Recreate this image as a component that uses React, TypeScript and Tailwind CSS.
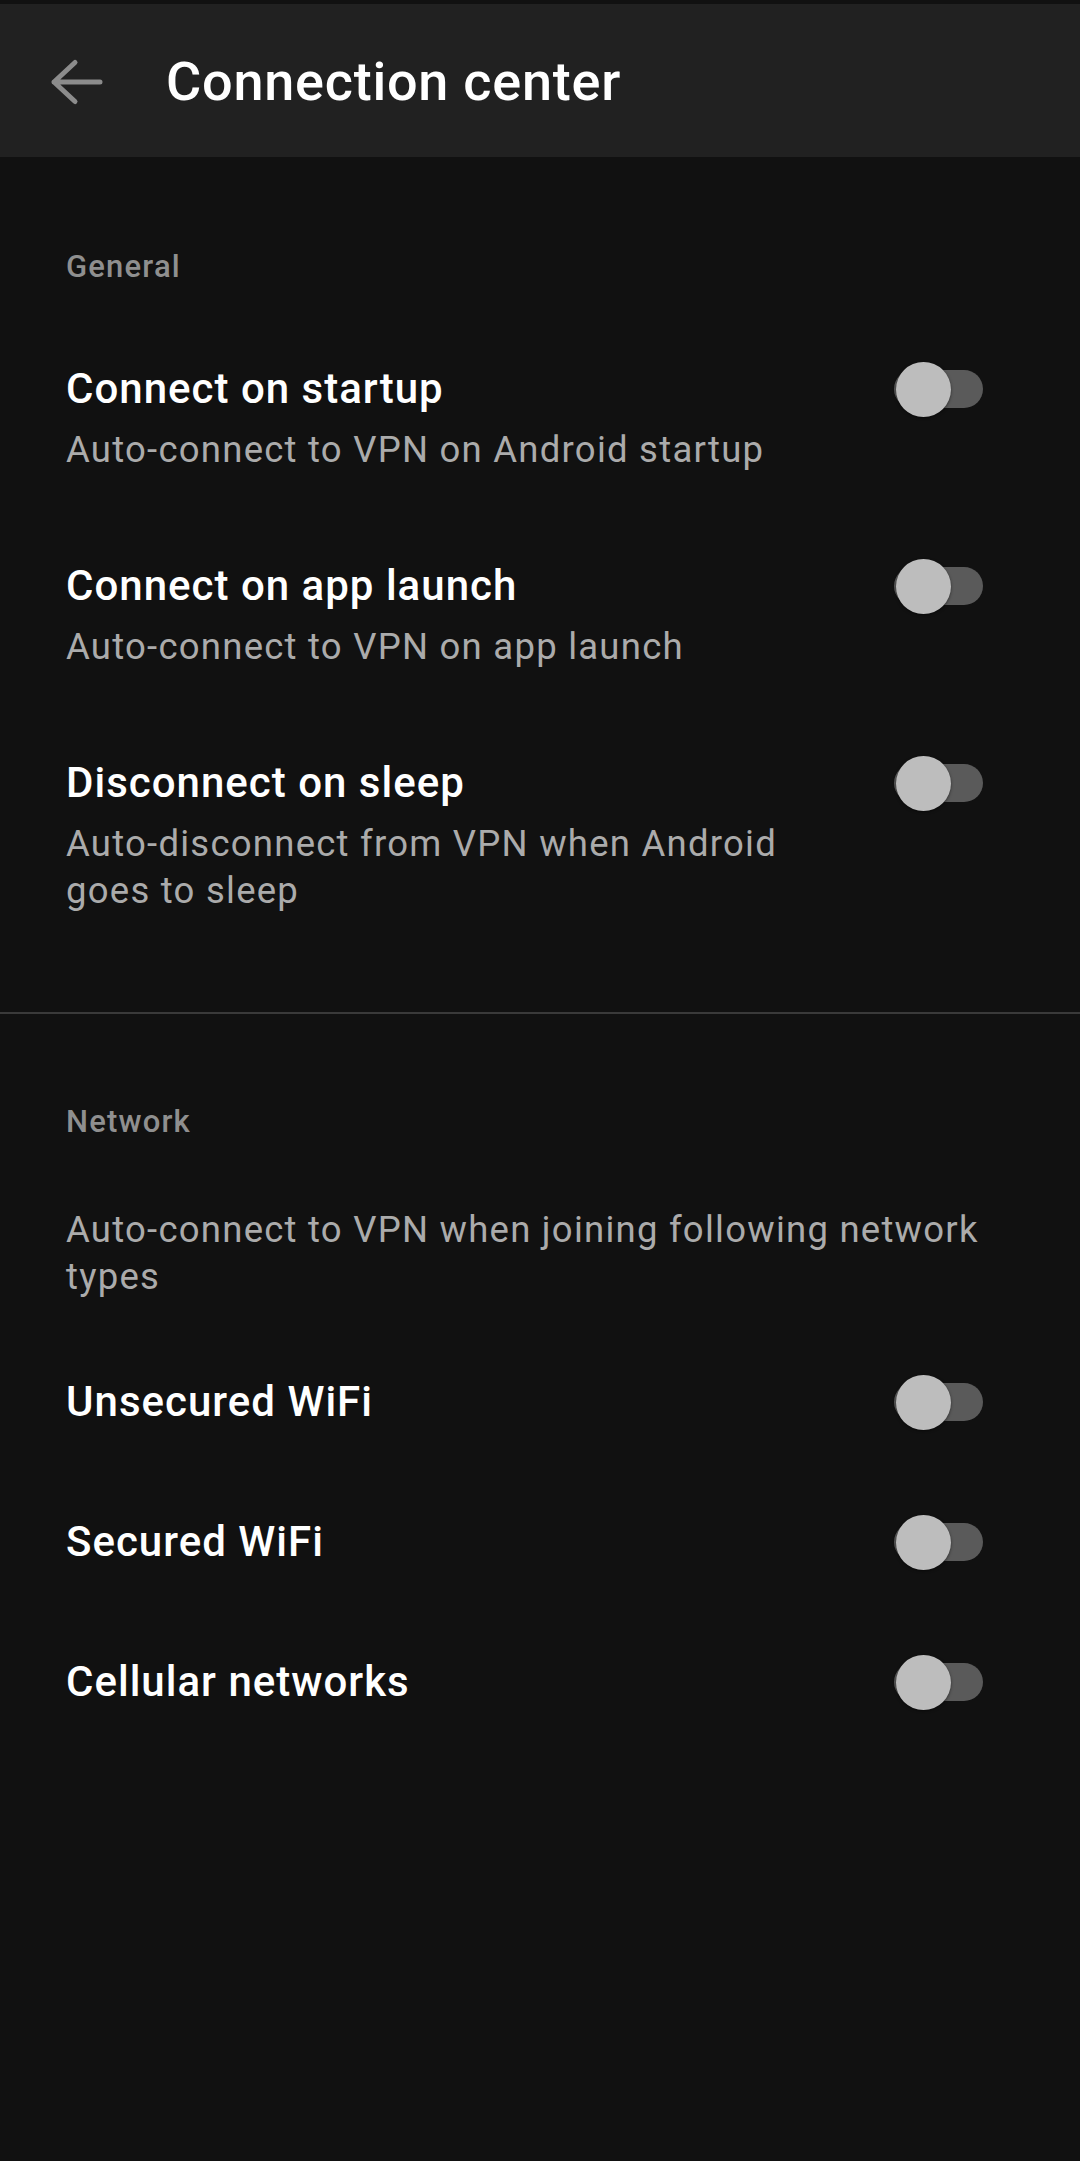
import React from 'react';

interface SettingRowProps {
    title: string;
    subtitle?: string;
    className?: string;
}

const Toggle: React.FC = () => (
    <div className="relative w-[89px] h-[55px] shrink-0">
        <div className="absolute right-0 top-[8.5px] w-[89px] h-[38px] rounded-full bg-[#5a5a5a]" />
        <div className="absolute left-[2px] top-0 w-[55px] h-[55px] rounded-full bg-[#bdbdbd] shadow-[0_1px_3px_rgba(0,0,0,0.5)]" />
    </div>
);

const SettingRow: React.FC<SettingRowProps> = ({ title, subtitle, className = '' }) => (
    <div className={`pl-[66px] pr-[97px] ${className}`}>
        <div className="flex items-center justify-between h-[60px]">
            <span className="text-[42px] font-medium text-white leading-[60px] tracking-[0.024em]">{title}</span>
            <Toggle />
        </div>
        {subtitle && (
            <p className="mt-[7px] pr-[150px] text-[36.5px] leading-[47px] tracking-[0.034em] text-[#ababab]">
                {subtitle}
            </p>
        )}
    </div>
);

const SectionLabel: React.FC<{ label: string; className?: string }> = ({ label, className = '' }) => (
    <div className={`pl-[66px] text-[31px] font-medium leading-[40px] tracking-[0.038em] text-[#8f8f8f] ${className}`}>
        {label}
    </div>
);

export default function App() {
    return (
        <div
            className="min-h-[2161px] bg-[#111111] pt-[4px]"
            style={{ fontFamily: 'Roboto, "Noto Sans", sans-serif' }}
        >
            {/* Toolbar */}
            <div className="flex items-center h-[153px] bg-[#212121] pl-[46px]">
                <svg width="60" height="50" viewBox="0 0 60 50" className="mt-[3px]" fill="none">
                    <path
                        d="M8 25 H54 M29 5.5 L8 25 L29 44.5"
                        stroke="#8c8c8c"
                        strokeWidth="5"
                        strokeLinecap="round"
                        strokeLinejoin="round"
                    />
                </svg>
                <h1 className="ml-[60px] mt-[2px] text-[54px] font-medium text-white leading-none tracking-[0.014em]">
                    Connection center
                </h1>
            </div>

            {/* General */}
            <SectionLabel label="General" className="mt-[90px]" />
            <SettingRow
                className="mt-[72px]"
                title="Connect on startup"
                subtitle="Auto-connect to VPN on Android startup"
            />
            <SettingRow
                className="mt-[83px]"
                title="Connect on app launch"
                subtitle="Auto-connect to VPN on app launch"
            />
            <SettingRow
                className="mt-[83px]"
                title="Disconnect on sleep"
                subtitle="Auto-disconnect from VPN when Android goes to sleep"
            />

            <div className="mt-[98px] h-[2px] bg-[#3a3a3a]" />

            {/* Network */}
            <SectionLabel label="Network" className="mt-[88px]" />
            <p className="mt-[64px] pl-[66px] pr-[66px] text-[36.5px] leading-[47px] tracking-[0.034em] text-[#ababab]">
                Auto-connect to VPN when joining following network types
            </p>
            <SettingRow className="mt-[72px]" title="Unsecured WiFi" />
            <SettingRow className="mt-[80px]" title="Secured WiFi" />
            <SettingRow className="mt-[80px]" title="Cellular networks" />
        </div>
    );
}
